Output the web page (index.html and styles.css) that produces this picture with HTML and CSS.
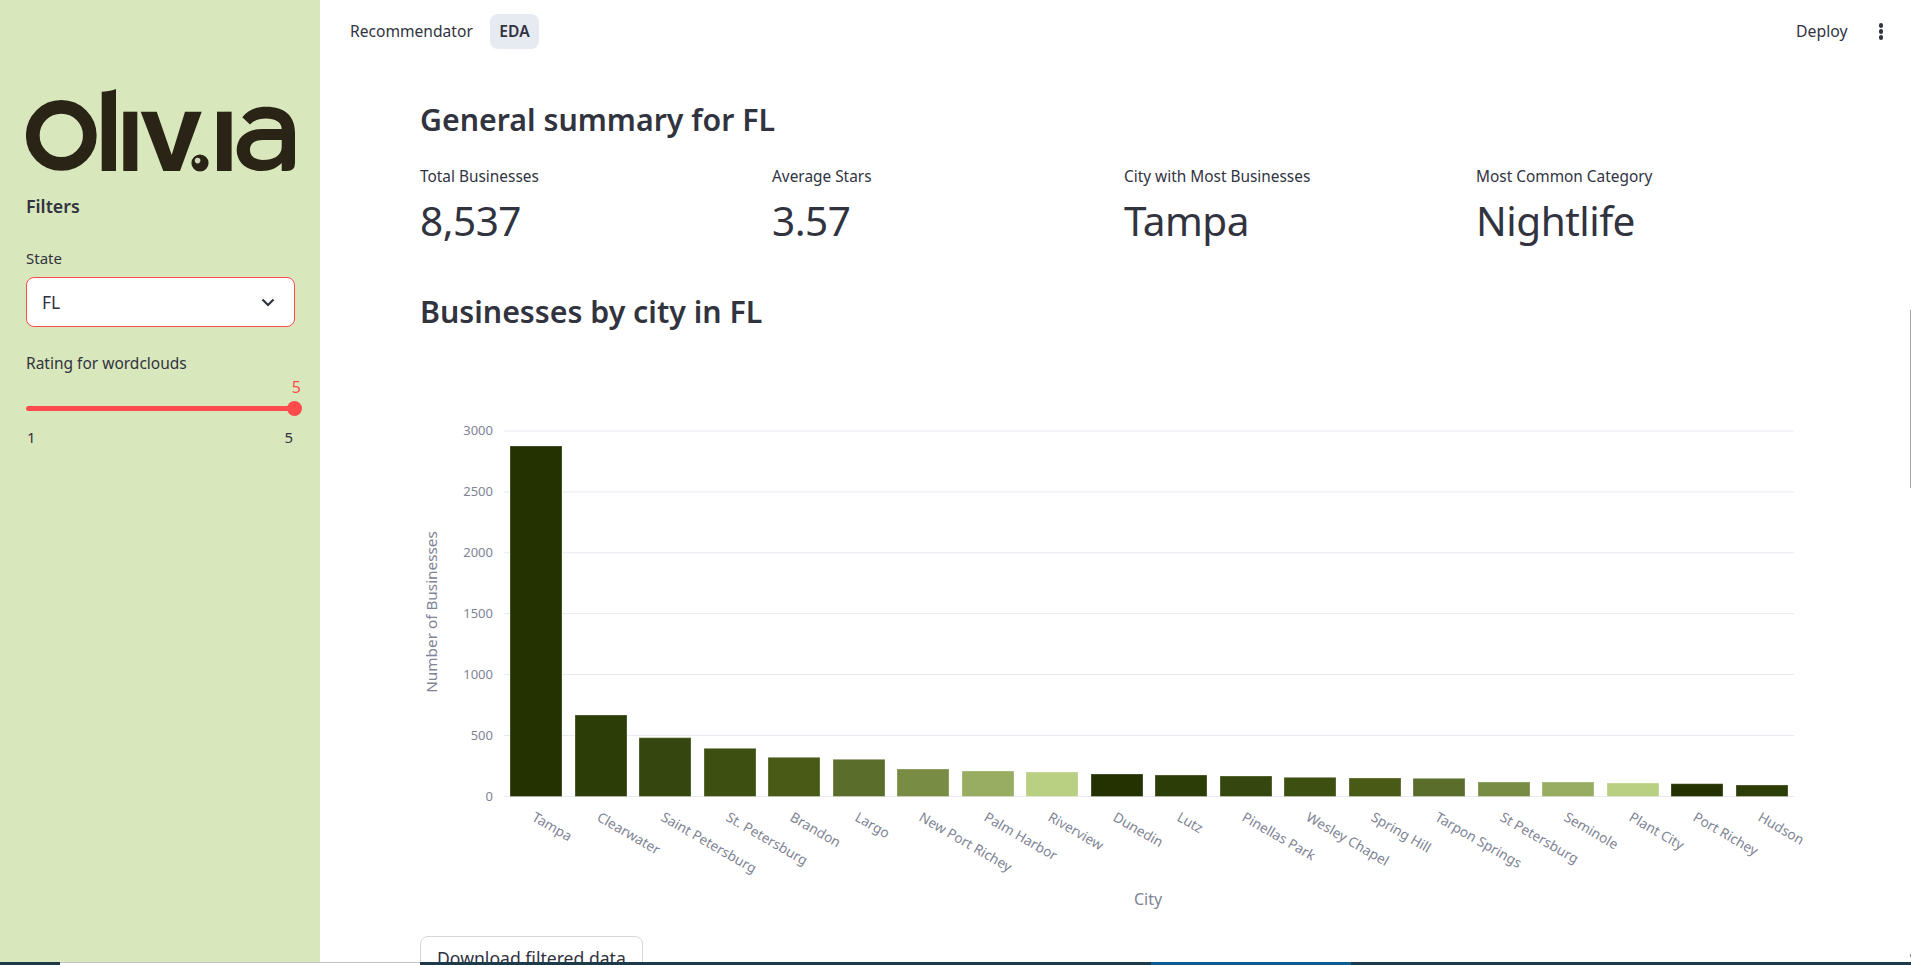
FILE: index.html
```html
<!DOCTYPE html>
<html lang="en">
<head>
    <meta charset="UTF-8">
    <meta name="viewport" content="width=device-width, initial-scale=1.0">
    <title>EDA</title>
    <link rel="stylesheet" href="styles.css">
</head>
<body>
    <div class="app">
        <!-- Sidebar -->
        <aside class="sidebar">
            <svg class="logo" viewBox="26 89 270 83" role="img" aria-label="oliv.ia logo">
                <circle cx="61.3" cy="135.4" r="28.5" fill="none" stroke="#2a2416" stroke-width="13.7"/>
                <path d="M101.7 91.7 C106 91.7 111 91 116 89 V171 H101.7 Z" fill="#2a2416"/>
                <rect x="123.3" y="111.7" width="14" height="59.3" fill="#2a2416"/>
                <path d="M140.7 111.7 H156.7 L171.7 155 L185 111.7 H201.7 L180 171 H163.3 Z" fill="#2a2416"/>
                <circle cx="200" cy="163" r="8.6" fill="#2a2416"/>
                <circle cx="197.6" cy="160.6" r="2.8" fill="#cfd8b8"/>
                <rect x="217" y="111.7" width="14.6" height="59.3" fill="#2a2416"/>
                <path fill-rule="evenodd" fill="#2a2416" d="M242.3 117.3 C248 110 256 106.7 266 106.7 C285 106.7 295 116 295 133 V163 Q295 171 287 171 H281.7 V163 C277 168 270 171 262 171 C246 171 236.7 162 236.7 150 C236.7 137 247 129 262 129 H281.7 C281.7 122 275 118.5 266 118.5 C259 118.5 254 120.5 250 124.5 Z M281.7 140 H263 C254 140 250 144 250 150 C250 156 255 160 263 160 C273 160 281.7 156 281.7 147 Z"/>
            </svg>
            <h4 class="side-title">Filters</h4>
            <label class="side-label">State</label>
            <div class="select">
                <span>FL</span>
                <svg class="chevron" viewBox="0 0 14 9"><path d="M1.5 1.5 L7 7 L12.5 1.5" fill="none" stroke="#31333f" stroke-width="2.2"/></svg>
            </div>
            <label class="side-label rating-label">Rating for wordclouds</label>
            <div class="slider">
                <span class="slider-value">5</span>
                <div class="slider-track"><span class="slider-thumb"></span></div>
                <div class="slider-ends"><span>1</span><span>5</span></div>
            </div>
        </aside>

        <main class="main">
            <!-- Top navigation -->
            <header class="topbar">
                <nav class="nav">
                    <a class="nav-link">Recommendator</a>
                    <a class="nav-link active">EDA</a>
                </nav>
                <div class="actions">
                    <span class="deploy">Deploy</span>
                    <span class="kebab"><i></i><i></i><i></i></span>
                </div>
            </header>

            <section class="content">
                <h3>General summary for FL</h3>
                <div class="metrics">
                    <div class="metric"><p class="metric-label">Total Businesses</p><p class="metric-value">8,537</p></div>
                    <div class="metric"><p class="metric-label">Average Stars</p><p class="metric-value">3.57</p></div>
                    <div class="metric"><p class="metric-label">City with Most Businesses</p><p class="metric-value">Tampa</p></div>
                    <div class="metric"><p class="metric-label">Most Common Category</p><p class="metric-value">Nightlife</p></div>
                </div>
                <h3 class="second">Businesses by city in FL</h3>

                <!-- Grafica de barras -->
                <svg class="chart" viewBox="420 340 1400 596">
                    <g class="grid">
                        <line x1="504" x2="1794" y1="431" y2="431"/>
                        <line x1="504" x2="1794" y1="491.9" y2="491.9"/>
                        <line x1="504" x2="1794" y1="552.8" y2="552.8"/>
                        <line x1="504" x2="1794" y1="613.7" y2="613.7"/>
                        <line x1="504" x2="1794" y1="674.6" y2="674.6"/>
                        <line x1="504" x2="1794" y1="735.5" y2="735.5"/>
                        <line x1="504" x2="1794" y1="796.5" y2="796.5"/>
                    </g>
                    <g class="y-ticks">
                        <text x="493" y="435">3000</text>
                        <text x="493" y="496">2500</text>
                        <text x="493" y="557">2000</text>
                        <text x="493" y="618">1500</text>
                        <text x="493" y="679">1000</text>
                        <text x="493" y="740">500</text>
                        <text x="493" y="801">0</text>
                    </g>
                    <g class="bars">
                        <rect x="510" y="446" width="52" height="350.5" fill="#233200"/>
                        <rect x="575" y="715" width="52" height="81.5" fill="#2d3d07"/>
                        <rect x="639" y="737.7" width="52" height="58.8" fill="#35470e"/>
                        <rect x="704" y="748.3" width="52" height="48.2" fill="#3e5011"/>
                        <rect x="768" y="757.3" width="52" height="39.2" fill="#485a15"/>
                        <rect x="833" y="759.3" width="52" height="37.2" fill="#5b6d2a"/>
                        <rect x="897" y="769" width="52" height="27.5" fill="#788c44"/>
                        <rect x="962" y="771" width="52" height="25.5" fill="#98ad62"/>
                        <rect x="1026" y="772" width="52" height="24.5" fill="#b9cf82"/>
                        <rect x="1091" y="774" width="52" height="22.5" fill="#233200"/>
                        <rect x="1155" y="775" width="52" height="21.5" fill="#2d3d07"/>
                        <rect x="1220" y="776" width="52" height="20.5" fill="#35470e"/>
                        <rect x="1284" y="777.3" width="52" height="19.2" fill="#3e5011"/>
                        <rect x="1349" y="778" width="52" height="18.5" fill="#485a15"/>
                        <rect x="1413" y="778.3" width="52" height="18.2" fill="#5b6d2a"/>
                        <rect x="1478" y="782" width="52" height="14.5" fill="#788c44"/>
                        <rect x="1542" y="782" width="52" height="14.5" fill="#98ad62"/>
                        <rect x="1607" y="783" width="52" height="13.5" fill="#b9cf82"/>
                        <rect x="1671" y="783.7" width="52" height="12.8" fill="#233200"/>
                        <rect x="1736" y="785" width="52" height="11.5" fill="#2d3d07"/>
                    </g>
                    <g class="x-ticks">
                        <text transform="translate(531 820) rotate(30)">Tampa</text>
                        <text transform="translate(596 820) rotate(30)">Clearwater</text>
                        <text transform="translate(660 820) rotate(30)">Saint Petersburg</text>
                        <text transform="translate(725 820) rotate(30)">St. Petersburg</text>
                        <text transform="translate(789 820) rotate(30)">Brandon</text>
                        <text transform="translate(854 820) rotate(30)">Largo</text>
                        <text transform="translate(918 820) rotate(30)">New Port Richey</text>
                        <text transform="translate(983 820) rotate(30)">Palm Harbor</text>
                        <text transform="translate(1047 820) rotate(30)">Riverview</text>
                        <text transform="translate(1112 820) rotate(30)">Dunedin</text>
                        <text transform="translate(1176 820) rotate(30)">Lutz</text>
                        <text transform="translate(1241 820) rotate(30)">Pinellas Park</text>
                        <text transform="translate(1305 820) rotate(30)">Wesley Chapel</text>
                        <text transform="translate(1370 820) rotate(30)">Spring Hill</text>
                        <text transform="translate(1434 820) rotate(30)">Tarpon Springs</text>
                        <text transform="translate(1499 820) rotate(30)">St Petersburg</text>
                        <text transform="translate(1563 820) rotate(30)">Seminole</text>
                        <text transform="translate(1628 820) rotate(30)">Plant City</text>
                        <text transform="translate(1692 820) rotate(30)">Port Richey</text>
                        <text transform="translate(1757 820) rotate(30)">Hudson</text>
                    </g>
                    <text class="axis-title" transform="translate(437 612) rotate(-90)">Number of Businesses</text>
                    <text class="axis-title city" x="1148" y="905">City</text>
                </svg>

                <button class="download">Download filtered data</button>
            </section>
        </main>
    </div>

    <!-- Scroll bar and window strip -->
    <span class="scroll-thumb"></span>
    <span class="scroll-arrow"></span>
    <div class="strip">
        <span class="strip-dark strip-start"></span>
        <span class="strip-line"></span>
        <span class="strip-dark strip-mid"></span>
        <span class="strip-blue"></span>
        <span class="strip-dark strip-end"></span>
    </div>
</body>
</html>
```

FILE: styles.css
```css
* {
    box-sizing: border-box;
}

html, body {
    height: 100%;
}

body {
    margin: 0;
    font-family: "Noto Sans", sans-serif;
    color: #31333f;
    background-color: #ffffff;
    overflow: hidden;
}

.app {
    display: flex;
    height: 100vh;
    overflow: hidden;
}

/* Sidebar */
.sidebar {
    width: 320px;
    flex-shrink: 0;
    background-color: #d9e7bc;
    padding: 89px 25px 0 26px;
    display: flex;
    flex-direction: column;
}

.logo {
    width: 270px;
    height: 83px;
    display: block;
}

.side-title {
    margin: 22px 0 0;
    font-size: 17.8px;
    font-weight: 600;
    line-height: 24px;
}

.side-label {
    margin-top: 30px;
    font-size: 15px;
    line-height: 20px;
}

.select {
    margin-top: 9px;
    height: 50px;
    background-color: #ffffff;
    border: 1px solid #ff4b4b;
    border-radius: 8px;
    padding: 0 19px 0 15px;
    display: flex;
    align-items: center;
    justify-content: space-between;
    font-size: 17.5px;
}

.chevron {
    width: 14px;
    height: 9px;
}

.rating-label {
    margin-top: 26px;
    font-size: 15.5px;
}

.slider {
    display: flex;
    flex-direction: column;
}

.slider-value {
    align-self: flex-end;
    margin: 4px -6px 0 0;
    font-size: 16px;
    line-height: 20px;
    color: #ff4b4b;
}

.slider-track {
    position: relative;
    height: 5px;
    margin-top: 9px;
    background-color: #ff4b4b;
    border-radius: 3px;
}

.slider-thumb {
    position: absolute;
    right: -7px;
    top: -5px;
    width: 15px;
    height: 15px;
    border-radius: 50%;
    background-color: #ff4b4b;
}

.slider-ends {
    display: flex;
    justify-content: space-between;
    margin-top: 16px;
    padding: 0 2px 0 1px;
    font-size: 15px;
    line-height: 20px;
}

/* Top bar */
.main {
    flex: 1;
    min-width: 0;
    display: flex;
    flex-direction: column;
}

.topbar {
    height: 64px;
    flex-shrink: 0;
    display: flex;
    justify-content: space-between;
    padding: 14px 28px 0 20px;
}

.nav {
    display: flex;
    gap: 7px;
    height: 35px;
}

.nav-link {
    padding: 0 10px 1px;
    display: flex;
    align-items: center;
    font-size: 15.6px;
    border-radius: 8px;
}

.nav-link.active {
    background-color: #e6eaf1;
    font-weight: 600;
    padding: 0 9.5px 1px;
}

.actions {
    display: flex;
    align-items: center;
    height: 35px;
    gap: 31px;
}

.deploy {
    font-size: 15.8px;
    padding-bottom: 1px;
}

.kebab {
    display: flex;
    flex-direction: column;
    gap: 1.5px;
}

.kebab i {
    width: 4.5px;
    height: 4.5px;
    border-radius: 50%;
    background-color: #31333f;
}

/* Contenido */
.content {
    padding: 0 0 0 100px;
}

h3 {
    margin: 34px 0 0;
    font-size: 30.3px;
    font-weight: 600;
    line-height: 44px;
}

.metrics {
    display: flex;
    margin-top: 25px;
}

.metric {
    width: 352px;
}

.metric p {
    margin: 0;
}

.metric-label {
    font-size: 15.4px;
    line-height: 20px;
    padding-bottom: 6px;
}

.metric-value {
    font-size: 40.5px;
    line-height: 56px;
    letter-spacing: -0.5px;
}

h3.second {
    margin-top: 41px;
}

.chart {
    display: block;
    width: 1400px;
    height: 596px;
    margin-top: 6px;
}

.grid line {
    stroke: #e6eaf1;
    stroke-width: 1;
}

.y-ticks text {
    font-size: 13px;
    fill: #808495;
    text-anchor: end;
}

.x-ticks text {
    font-size: 13.7px;
    fill: #808495;
}

.bars rect {
    stroke: rgba(255, 255, 255, 0.3);
    stroke-width: 1;
}

.axis-title {
    font-size: 15.3px;
    fill: #808495;
    text-anchor: middle;
}

.axis-title.city {
    font-size: 16px;
}

.download {
    display: block;
    padding: 0 16px;
    height: 44px;
    background-color: #ffffff;
    border: 1px solid #d6d6d9;
    border-radius: 8px;
    font-family: inherit;
    font-size: 17.6px;
    color: #31333f;
}

/* Overlays */
.scroll-thumb {
    position: fixed;
    right: 0;
    top: 310px;
    width: 1px;
    height: 178px;
    background-color: #a9a9a9;
}

.scroll-arrow {
    position: fixed;
    right: 0;
    top: 954px;
    width: 1px;
    height: 3px;
    background-color: #8a8a8a;
}

.strip {
    position: fixed;
    left: 0;
    right: 0;
    bottom: 0;
    height: 3px;
    display: flex;
}

.strip-dark {
    background-color: #1c3a4a;
}

.strip-start {
    width: 60px;
}

.strip-line {
    width: 360px;
    background: linear-gradient(#c4c4c4 1px, #ffffff 1px);
}

.strip-mid {
    width: 731px;
}

.strip-blue {
    width: 200px;
    background-color: #0f5c94;
}

.strip-end {
    flex: 1;
}
```
